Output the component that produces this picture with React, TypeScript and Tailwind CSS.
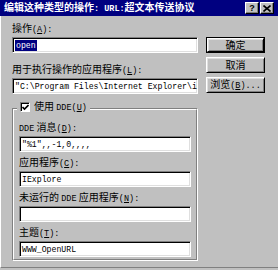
import React from "react";

// win95 style "edit action" dialog

function M({ children }: { children: React.ReactNode }) {
  return <span className="font-['Liberation_Mono',monospace] text-[8.5px]">{children}</span>;
}

function K({ children }: { children: React.ReactNode }) {
  return <span className="underline underline-offset-[1px]">{children}</span>;
}

function Label({ children, className = "" }: { children: React.ReactNode; className?: string }) {
  return <div className={`h-[12px] leading-[12px] whitespace-nowrap ${className}`}>{children}</div>;
}

function TextBox({ value, selected, className = "" }: { value: string; selected?: boolean; className?: string }) {
  return (
    <div
      className={`h-[16px] bg-white border border-t-[#808080] border-l-[#808080] border-r-white border-b-white shadow-[inset_1px_1px_0_#000,inset_-1px_-1px_0_#dfdfdf] flex items-center pl-[2px] overflow-hidden ${className}`}
    >
      <span
        className={`font-['Liberation_Mono',monospace] text-[8.2px] leading-[11px] whitespace-nowrap ${
          selected ? "bg-[#000080] text-white px-[1px]" : "text-black"
        }`}
      >
        {value}
      </span>
    </div>
  );
}

function Button({ children, isDefault }: { children: React.ReactNode; isDefault?: boolean }) {
  const face = (
    <div className="h-full flex items-center justify-center border border-t-white border-l-white border-r-black border-b-black shadow-[inset_1px_1px_0_#dfdfdf,inset_-1px_-1px_0_#808080]">
      <span className="leading-[12px] whitespace-nowrap">{children}</span>
    </div>
  );
  if (isDefault) {
    return <div className="h-[16px] border border-black">{face}</div>;
  }
  return <div className="h-[16px]">{face}</div>;
}

function TitleButton({ children }: { children: React.ReactNode }) {
  return (
    <div className="w-[14px] h-[12px] bg-[#c0c0c0] flex items-center justify-center border border-t-white border-l-white border-r-black border-b-black shadow-[inset_-1px_-1px_0_#808080]">
      {children}
    </div>
  );
}

export default function App() {
  return (
    <div className="w-[278px] h-[270px] bg-[#c0c0c0] flex flex-col overflow-hidden font-['Noto_Sans_CJK_SC',sans-serif] text-[10px] text-black">
      {/* title bar */}
      <div className="h-[16px] bg-[#000080] flex items-center pl-[4px] pr-[4px]">
        <div className="flex-1 text-white font-bold leading-[14px] whitespace-nowrap">
          编辑这种类型的操作<M>: URL:</M>超文本传送协议
        </div>
        <TitleButton>
          <span className="font-['Liberation_Sans',sans-serif] font-bold text-[9px] leading-[9px]">?</span>
        </TitleButton>
        <div className="w-[1px]" />
        <TitleButton>
          <svg width="8" height="7" viewBox="0 0 8 7">
            <path d="M0.5 0.5 L7.5 6.5 M7.5 0.5 L0.5 6.5" stroke="#000" strokeWidth="1.6" />
          </svg>
        </TitleButton>
      </div>

      {/* body */}
      <div className="flex-1 flex border-l border-l-white border-b border-b-[#808080] mb-[2px] pl-[11px]">
        <div className="w-[186px] flex flex-col pt-[6px]">
          <Label>
            操作<M>(<K>A</K>):</M>
          </Label>
          <TextBox className="mt-[3px]" value="open" selected />
          <Label className="mt-[10px]">
            用于执行操作的应用程序<M>(<K>L</K>):</M>
          </Label>
          <TextBox className="mt-[3px]" value={'"C:\\Program Files\\Internet Explorer\\iexplore.exe" -nohome'} />

          {/* DDE group */}
          <div className="relative mt-[14px] border border-t-[#808080] border-l-[#808080] border-r-white border-b-white">
            <div className="border border-t-white border-l-white border-r-[#808080] border-b-[#808080] px-[5px] pt-[11px] pb-[2px] flex flex-col">
              <Label>
                <M>DDE</M> 消息<M>(<K>D</K>):</M>
              </Label>
              <TextBox className="mt-[3px]" value={'"%1",,-1,0,,,,'} />
              <Label className="mt-[4px]">
                应用程序<M>(<K>C</K>):</M>
              </Label>
              <TextBox className="mt-[3px]" value="IExplore" />
              <Label className="mt-[4px]">
                未运行的 <M>DDE</M> 应用程序<M>(<K>N</K>):</M>
              </Label>
              <TextBox className="mt-[3px]" value="" />
              <Label className="mt-[4px]">
                主题<M>(<K>T</K>):</M>
              </Label>
              <TextBox className="mt-[3px]" value="WWW_OpenURL" />
            </div>
            <div className="absolute top-[-8px] left-[4px] h-[12px] px-[3px] bg-[#c0c0c0] flex items-center gap-[4px]">
              <div className="w-[10px] h-[10px] bg-white border border-t-[#808080] border-l-[#808080] border-r-white border-b-white shadow-[inset_1px_1px_0_#000] flex items-center justify-center">
                <svg width="7" height="7" viewBox="0 0 7 7">
                  <path d="M0.5 3 L2.5 5 L6.5 1" stroke="#000" strokeWidth="1.6" fill="none" />
                </svg>
              </div>
              <span className="leading-[12px] whitespace-nowrap">
                使用 <M>DDE(<K>U</K>)</M>
              </span>
            </div>
          </div>
        </div>

        {/* buttons */}
        <div className="ml-[8px] w-[59px] flex flex-col gap-[4px] pt-[21px]">
          <Button isDefault>确定</Button>
          <Button>取消</Button>
          <Button>
            浏览<M>(<K>B</K>)...</M>
          </Button>
        </div>
      </div>
    </div>
  );
}
